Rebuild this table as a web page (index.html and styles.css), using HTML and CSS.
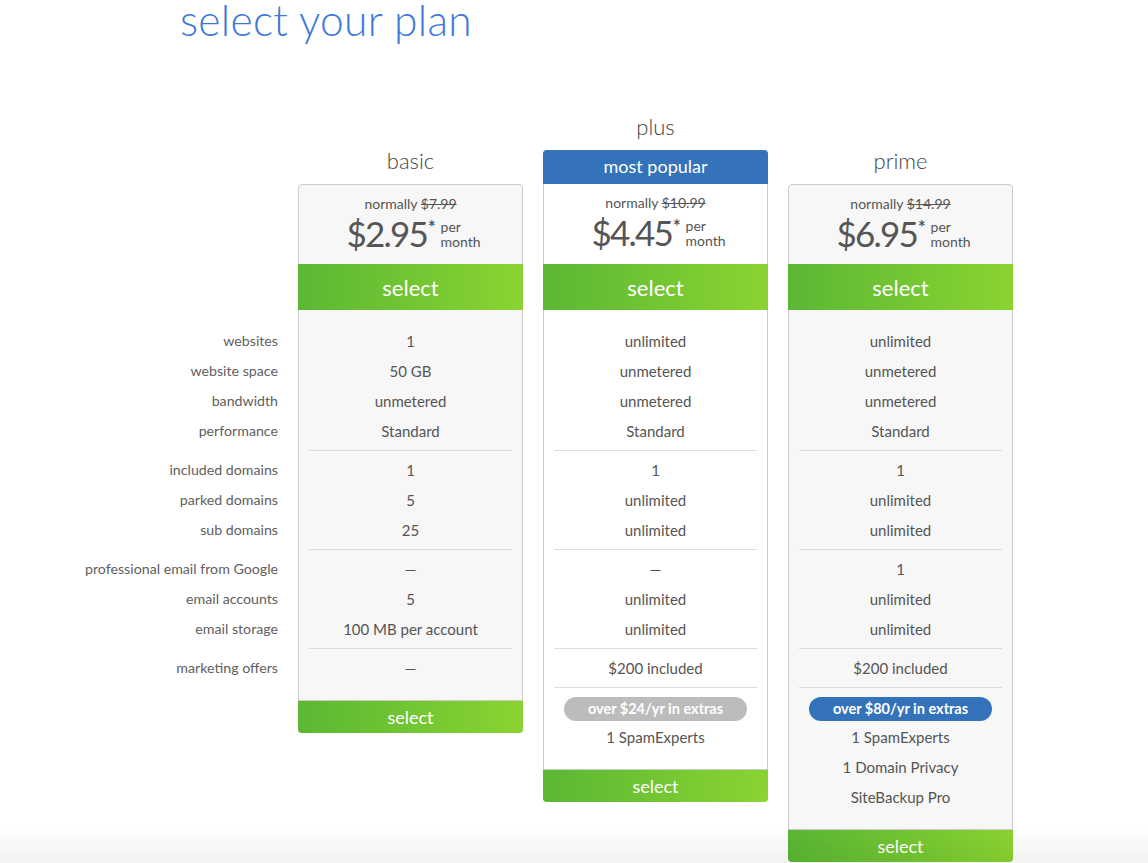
FILE: index.html
```html
<!DOCTYPE html>
<html lang="en">
<head>
<meta charset="utf-8">
<title>select your plan</title>
<link rel="stylesheet" href="styles.css">
</head>
<body>
<div class="page">
  <h1 class="title">select your plan</h1>
  <div class="plans">
    <div class="labels">
      <div class="group">
        <div class="row">websites</div>
        <div class="row">website space</div>
        <div class="row">bandwidth</div>
        <div class="row">performance</div>
      </div>
      <div class="group">
        <div class="row">included domains</div>
        <div class="row">parked domains</div>
        <div class="row">sub domains</div>
      </div>
      <div class="group">
        <div class="row">professional email from Google</div>
        <div class="row">email accounts</div>
        <div class="row">email storage</div>
      </div>
      <div class="group">
        <div class="row">marketing offers</div>
      </div>
    </div>

    <div class="plan plan-offset">
      <div class="plan-name">basic</div>
      <div class="card">
        <div class="price">
          <div class="normally">normally <s>$7.99</s></div>
          <div class="amount"><span class="num">$2.95</span><span class="ast">*</span><span class="per">per<br>month</span></div>
        </div>
        <div class="btn btn-top">select</div>
        <div class="features">
          <div class="group">
            <div class="row">1</div>
            <div class="row">50 GB</div>
            <div class="row">unmetered</div>
            <div class="row">Standard</div>
          </div>
          <div class="group">
            <div class="row">1</div>
            <div class="row">5</div>
            <div class="row">25</div>
          </div>
          <div class="group">
            <div class="row">—</div>
            <div class="row">5</div>
            <div class="row">100 MB per account</div>
          </div>
          <div class="group">
            <div class="row">—</div>
          </div>
        </div>
        <div class="btn btn-bottom">select</div>
      </div>
    </div>

    <div class="plan">
      <div class="plan-name">plus</div>
      <div class="card card-popular">
        <div class="popular">most popular</div>
        <div class="price price-popular">
          <div class="normally">normally <s>$10.99</s></div>
          <div class="amount"><span class="num">$4.45</span><span class="ast">*</span><span class="per">per<br>month</span></div>
        </div>
        <div class="btn btn-top">select</div>
        <div class="features">
          <div class="group">
            <div class="row">unlimited</div>
            <div class="row">unmetered</div>
            <div class="row">unmetered</div>
            <div class="row">Standard</div>
          </div>
          <div class="group">
            <div class="row">1</div>
            <div class="row">unlimited</div>
            <div class="row">unlimited</div>
          </div>
          <div class="group">
            <div class="row">—</div>
            <div class="row">unlimited</div>
            <div class="row">unlimited</div>
          </div>
          <div class="group">
            <div class="row">$200 included</div>
          </div>
          <div class="group">
            <div class="row"><span class="badge badge-gray">over $24/yr in extras</span></div>
            <div class="row">1 SpamExperts</div>
          </div>
        </div>
        <div class="btn btn-bottom">select</div>
      </div>
    </div>

    <div class="plan plan-offset">
      <div class="plan-name">prime</div>
      <div class="card">
        <div class="price">
          <div class="normally">normally <s>$14.99</s></div>
          <div class="amount"><span class="num">$6.95</span><span class="ast">*</span><span class="per">per<br>month</span></div>
        </div>
        <div class="btn btn-top">select</div>
        <div class="features">
          <div class="group">
            <div class="row">unlimited</div>
            <div class="row">unmetered</div>
            <div class="row">unmetered</div>
            <div class="row">Standard</div>
          </div>
          <div class="group">
            <div class="row">1</div>
            <div class="row">unlimited</div>
            <div class="row">unlimited</div>
          </div>
          <div class="group">
            <div class="row">1</div>
            <div class="row">unlimited</div>
            <div class="row">unlimited</div>
          </div>
          <div class="group">
            <div class="row">$200 included</div>
          </div>
          <div class="group">
            <div class="row"><span class="badge badge-blue">over $80/yr in extras</span></div>
            <div class="row">1 SpamExperts</div>
            <div class="row">1 Domain Privacy</div>
            <div class="row">SiteBackup Pro</div>
          </div>
        </div>
        <div class="btn btn-bottom">select</div>
      </div>
    </div>
  </div>
</div>
<div class="fade"></div>
</body>
</html>
```

FILE: styles.css
```css
* { box-sizing: border-box; }

html, body {
  margin: 0;
  padding: 0;
  background: #ffffff;
}

body {
  font-family: "Lato", "Open Sans", sans-serif;
  color: #555555;
}

.page {
  width: 1148px;
}

.title {
  margin: 0 0 0 180px;
  height: 39px;
  font-size: 42.5px;
  line-height: 39px;
  font-weight: 300;
  color: #3f79d8;
  letter-spacing: 0.3px;
}

.plans {
  display: flex;
  align-items: flex-start;
  gap: 20px;
  margin: 74px 0 0 78px;
}

.labels {
  width: 200px;
  padding-top: 213px;
  text-align: right;
  font-size: 14.2px;
  font-weight: 400;
  color: #606060;
}

.row {
  height: 30px;
  line-height: 30px;
  white-space: nowrap;
}

.group + .group {
  margin-top: 4px;
  padding-top: 4px;
  border-top: 1px solid #dcdcdc;
}

.labels .group + .group {
  border-top-color: transparent;
}

.plan {
  width: 225px;
}

.plan-offset {
  margin-top: 34px;
}

.plan-name {
  height: 28px;
  line-height: 28px;
  margin-bottom: 9px;
  text-align: center;
  font-size: 22px;
  font-weight: 300;
  color: #444444;
}

.card {
  border: 1px solid #cccccc;
  border-radius: 4px;
  background: #f7f7f7;
}

.card-popular {
  background: #ffffff;
}

.popular {
  margin: -1px -1px 0;
  height: 34px;
  line-height: 33px;
  border-radius: 4px 4px 0 0;
  background: #3473ba;
  color: #ffffff;
  text-align: center;
  font-size: 18px;
  font-weight: 400;
}

.price {
  padding: 10px 0 11px;
  text-align: center;
}

.price-popular {
  padding: 10px 0 12px;
}

.normally {
  height: 18px;
  line-height: 18px;
  font-size: 14px;
  font-weight: 400;
  color: #555555;
}

.normally s {
  text-decoration-thickness: 1px;
}

.amount {
  display: flex;
  justify-content: center;
  align-items: flex-end;
  height: 40px;
  padding-left: 6px;
}

.num {
  font-size: 35px;
  line-height: 40px;
  font-weight: 400;
  letter-spacing: -1.8px;
  color: #555555;
}

.ast {
  align-self: flex-start;
  font-size: 18px;
  line-height: 18px;
  margin-top: 5px;
  margin-left: 1px;
  font-weight: 700;
  color: #555555;
}

.per {
  margin: 0 0 4px 5px;
  font-size: 14px;
  line-height: 15px;
  text-align: left;
  font-weight: 400;
  color: #555555;
}

.btn {
  background: linear-gradient(to right, #5bb733, #8ad432);
  color: #ffffff;
  text-align: center;
  font-weight: 400;
}

.btn-top {
  margin: 0 -1px;
  height: 46px;
  line-height: 48px;
  font-size: 22px;
}

.btn-bottom {
  margin: 0 -1px -1px;
  height: 32px;
  line-height: 32px;
  font-size: 18px;
  border-radius: 0 0 4px 4px;
}

.features {
  padding: 16px 10px 17px;
  border-bottom: 1px solid #cccccc;
  text-align: center;
  font-size: 15px;
  font-weight: 400;
  color: #555555;
}

.badge {
  display: inline-block;
  width: 183px;
  height: 24px;
  line-height: 24px;
  border-radius: 12px;
  color: #ffffff;
  font-size: 14.5px;
  font-weight: 700;
  vertical-align: middle;
}

.badge-gray {
  background: #bcbcbc;
}

.badge-blue {
  background: #3473ba;
}

.fade {
  position: fixed;
  left: 0;
  right: 0;
  bottom: 0;
  height: 36px;
  pointer-events: none;
  background: linear-gradient(to bottom, rgba(0, 0, 0, 0), rgba(0, 0, 0, 0.05));
}
```
